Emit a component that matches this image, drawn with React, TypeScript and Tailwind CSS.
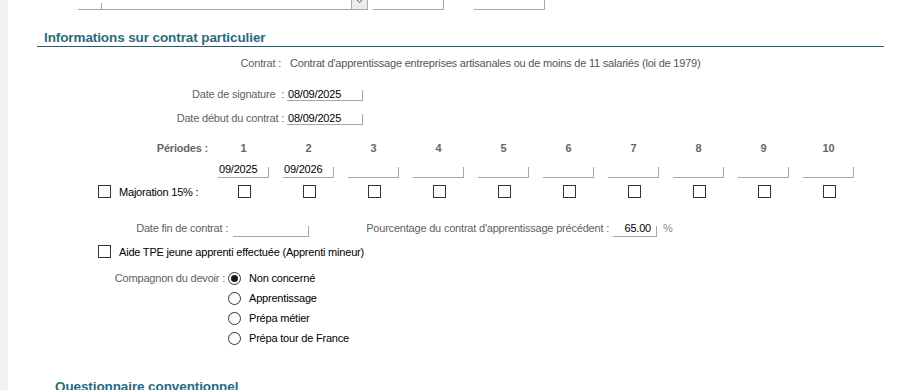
import type { ReactNode } from "react";

const labelCls = "text-[#5f5f5f]";
const periods = [1, 2, 3, 4, 5, 6, 7, 8, 9, 10];
const periodValues: Record<number, string> = { 1: "09/2025", 2: "09/2026" };

function Field({
  value,
  className = "",
  align = "left",
}: {
  value?: string;
  className?: string;
  align?: "left" | "right";
}) {
  return (
    <div
      className={`relative flex items-center border-b border-[#a7a7a7] text-black after:absolute after:bottom-0 after:right-0 after:h-[10px] after:w-px after:bg-[#a7a7a7] ${
        align === "right" ? "justify-end pr-[6px]" : "pl-[1px]"
      } ${className}`}
    >
      {value}
    </div>
  );
}

function Check() {
  return <div className="h-[13px] w-[13px] shrink-0 border border-[#333333] bg-white" />;
}

function Radio({ checked }: { checked?: boolean }) {
  return (
    <div className="flex h-[13px] w-[13px] shrink-0 items-center justify-center rounded-full border border-[#333333] bg-white">
      {checked && <div className="h-[7px] w-[7px] rounded-full bg-[#1a1a1a]" />}
    </div>
  );
}

function SectionTitle({ children }: { children: ReactNode }) {
  return (
    <div className="text-[13.5px] font-bold leading-[16px] tracking-[-0.1px] text-[#2b6a7e]">{children}</div>
  );
}

export default function App() {
  return (
    <div
      className="flex h-[390px] w-[907px] overflow-hidden bg-white text-[11px] leading-[14px] tracking-[-0.2px]"
      style={{ fontFamily: '"Liberation Sans", Arial, sans-serif' }}
    >
      <div className="w-[8px] shrink-0 bg-[#f2f2f2]" />

      <div className="flex flex-1 flex-col">
        {/* partially scrolled-away row */}
        <div className="flex h-[10px] items-end">
          <div className={`mb-[7px] w-[65px] text-right ${labelCls}`}>APS :</div>
          <div className="relative ml-[5px] h-[10px] w-[273px] border-b border-[#a7a7a7]">
            <div className="absolute bottom-0 left-[23px] h-[6px] w-px bg-[#a7a7a7]" />
          </div>
          <div className="flex h-[19px] w-[17px] items-center justify-center border border-[#a9a9a9] bg-[#ececec]">
            <svg width="7" height="4" viewBox="0 0 7 4" fill="none">
              <path d="M0.5 0.5 L3.5 3.5 L6.5 0.5" stroke="#555" strokeWidth="1" />
            </svg>
          </div>
          <Field className="ml-[5px] h-[10px] w-[71px]" />
          <Field className="ml-[30px] h-[10px] w-[71px]" />
        </div>

        {/* section header */}
        <div className="ml-[29px] mt-[20px] w-[847px] border-b border-[#2a5c6b] pl-[7px]">
          <SectionTitle>Informations sur contrat particulier</SectionTitle>
        </div>

        <div className="mt-[9px] flex h-[14px] items-center">
          <div className={`w-[273px] text-right ${labelCls}`}>Contrat :</div>
          <div className="ml-[9px] text-[#555555]">
            Contrat d'apprentissage entreprises artisanales ou de moins de 11 salariés (loi de 1979)
          </div>
        </div>

        <div className="mt-[17px] flex h-[14px] items-center">
          <div className={`w-[276px] text-right ${labelCls}`}>Date de signature&nbsp; :</div>
          <Field value="08/09/2025" className="ml-[3px] h-[14px] w-[76px]" />
        </div>

        <div className="mt-[10px] flex h-[14px] items-center">
          <div className={`w-[276px] text-right ${labelCls}`}>Date début du contrat :</div>
          <Field value="08/09/2025" className="ml-[3px] h-[14px] w-[76px]" />
        </div>

        {/* periods */}
        <div className="mt-[16px] flex h-[14px] items-center font-bold text-[#666666]">
          <div className="w-[200px] text-right">Périodes :</div>
          <div className="ml-[3px] flex">
            {periods.map((p) => (
              <div key={p} className="w-[65px] text-center">
                {p}
              </div>
            ))}
          </div>
        </div>

        <div className="mt-[5px] flex h-[18px] pl-[203px]">
          {periods.map((p) => (
            <div key={p} className="flex w-[65px] justify-center">
              <Field value={periodValues[p]} className="h-[18px] w-[51px]" />
            </div>
          ))}
        </div>

        <div className="mt-[7px] flex h-[13px] items-center">
          <div className="flex w-[203px] items-center pl-[90px]">
            <Check />
            <span className="ml-[8px] text-black">Majoration 15% :</span>
          </div>
          {periods.map((p) => (
            <div key={p} className="flex w-[65px] justify-center pl-[2px]">
              <Check />
            </div>
          ))}
        </div>

        <div className="mt-[21px] flex h-[18px] items-center">
          <div className={`w-[220px] text-right ${labelCls}`}>Date fin de contrat :</div>
          <Field className="ml-[5px] h-[18px] w-[76px]" />
          <div className={`ml-[54px] w-[246px] text-right ${labelCls}`}>
            Pourcentage du contrat d'apprentissage précédent :
          </div>
          <Field value="65.00" align="right" className="ml-[4px] h-[18px] w-[44px]" />
          <span className="ml-[6px] text-[#8a8a8a]">%</span>
        </div>

        <div className="mt-[8px] flex h-[13px] items-center pl-[90px]">
          <Check />
          <span className="ml-[8px] text-black">Aide TPE jeune apprenti effectuée (Apprenti mineur)</span>
        </div>

        {/* compagnon du devoir */}
        <div className="mt-[10px] flex">
          <div className={`flex h-[20px] w-[217px] items-center justify-end ${labelCls}`}>Compagnon du devoir :</div>
          <div className="ml-[3px] flex flex-col">
            {["Non concerné", "Apprentissage", "Prépa métier", "Prépa tour de France"].map((opt, i) => (
              <div key={opt} className="flex h-[20px] items-center">
                <Radio checked={i === 0} />
                <span className="ml-[8px] text-black">{opt}</span>
              </div>
            ))}
          </div>
        </div>

        <div className="ml-[47px] mt-[31px]">
          <SectionTitle>Questionnaire conventionnel</SectionTitle>
        </div>
      </div>
    </div>
  );
}
